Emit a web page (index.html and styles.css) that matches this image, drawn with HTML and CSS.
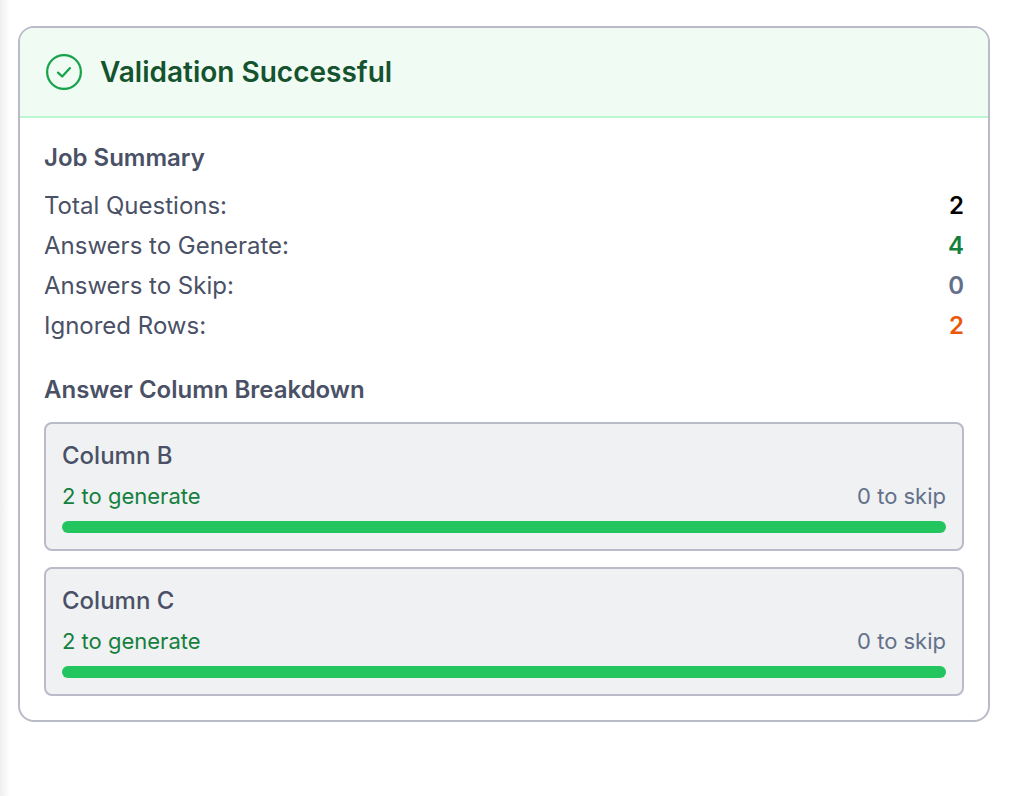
FILE: index.html
```html
<!DOCTYPE html>
<html lang="en">
  <head>
    <meta charset="UTF-8">
    <meta name="viewport" content="width=device-width, initial-scale=1.0">
    <title>Validation Successful</title>
    <link rel="stylesheet" href="styles.css">
  </head>
  <body>
    <div class="edge"></div>
    <main class="page">
      <div class="card">
        <div class="card-header">
          <svg class="check-icon" viewBox="0 0 24 24" fill="none" stroke="currentColor" stroke-width="1.5" stroke-linecap="round" stroke-linejoin="round">
            <circle cx="12" cy="12" r="11.25"></circle>
            <path d="M8 12.4l2.8 2.6L16 9.4"></path>
          </svg>
          <h1 class="card-title">Validation Successful</h1>
        </div>
        <div class="card-body">
          <h2 class="section-title">Job Summary</h2>
          <div class="summary">
            <div class="summary-row"><span>Total Questions:</span><span class="value value-total">2</span></div>
            <div class="summary-row"><span>Answers to Generate:</span><span class="value value-generate">4</span></div>
            <div class="summary-row"><span>Answers to Skip:</span><span class="value value-skip">0</span></div>
            <div class="summary-row"><span>Ignored Rows:</span><span class="value value-ignored">2</span></div>
          </div>
          <h2 class="section-title breakdown-title">Answer Column Breakdown</h2>
          <div class="columns">
            <div class="column-box">
              <div class="column-name">Column B</div>
              <div class="column-counts"><span class="count-generate">2 to generate</span><span class="count-skip">0 to skip</span></div>
              <div class="bar"></div>
            </div>
            <div class="column-box">
              <div class="column-name">Column C</div>
              <div class="column-counts"><span class="count-generate">2 to generate</span><span class="count-skip">0 to skip</span></div>
              <div class="bar"></div>
            </div>
          </div>
        </div>
      </div>
    </main>
  </body>
</html>
```

FILE: styles.css
```css
* {
  box-sizing: border-box;
}
body {
  margin: 0;
  height: 796px;
  overflow: hidden;
  display: flex;
  background-color: #fff;
  font-family: Inter, "Liberation Sans", sans-serif;
}
.edge {
  width: 10px;
  flex-shrink: 0;
  background: linear-gradient(to right, #efeff1, #fff);
}
.page {
  padding: 26px 0 0 8px;
}
.card {
  width: 972px;
  border: 2px solid #b9bcc8;
  border-radius: 16px;
  overflow: hidden;
}
.card-header {
  display: flex;
  align-items: center;
  gap: 18px;
  height: 90px;
  padding: 0 26px;
  background-color: #f0fbf4;
  border-bottom: 2px solid #bbf7d0;
}
.check-icon {
  width: 36px;
  height: 36px;
  color: #16a34a;
}
.card-title {
  margin: 0;
  font-size: 28px;
  line-height: 36px;
  font-weight: 600;
  color: #14532d;
}
.card-body {
  padding: 24px;
}
.section-title {
  margin: 0;
  font-size: 24px;
  line-height: 32px;
  font-weight: 600;
  color: #4a5166;
}
.summary {
  margin-top: 12px;
}
.summary-row {
  display: flex;
  justify-content: space-between;
  height: 40px;
  font-size: 24px;
  line-height: 40px;
  color: #4a5166;
}
.value {
  font-weight: 600;
}
.value-total {
  color: #000;
}
.value-generate {
  color: #15803d;
}
.value-skip {
  color: #64708a;
}
.value-ignored {
  color: #ea580c;
}
.breakdown-title {
  margin-top: 28px;
}
.columns {
  display: flex;
  flex-direction: column;
  gap: 16px;
  margin-top: 16px;
}
.column-box {
  height: 129px;
  padding: 16px 16px 0;
  background-color: #eff1f3;
  border: 2px solid #b9bcc8;
  border-radius: 8px;
}
.column-name {
  font-size: 24px;
  line-height: 32px;
  font-weight: 500;
  color: #4a5166;
}
.column-counts {
  display: flex;
  justify-content: space-between;
  margin-top: 8px;
  font-size: 22px;
  line-height: 32px;
}
.count-generate {
  color: #15803d;
}
.count-skip {
  color: #64708a;
}
.bar {
  height: 12px;
  margin-top: 9px;
  background-color: #22c55e;
  border-radius: 6px;
}
```
